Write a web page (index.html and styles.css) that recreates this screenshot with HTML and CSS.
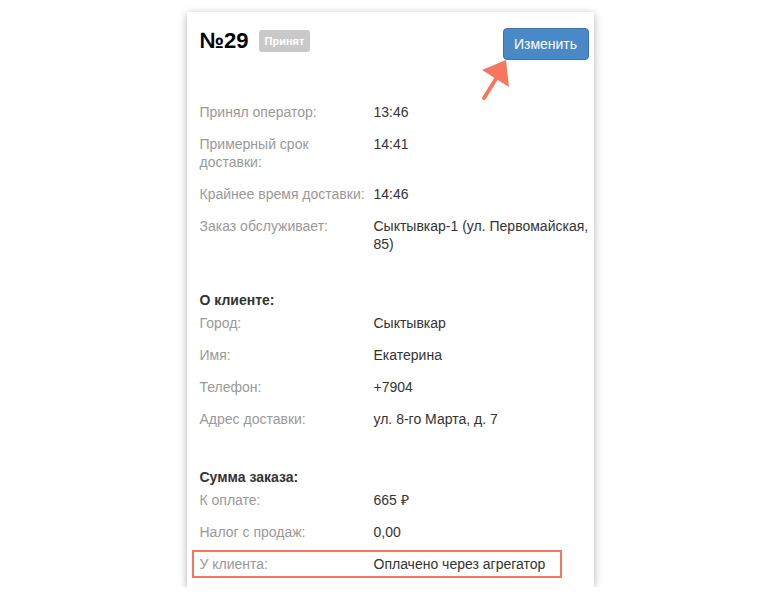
FILE: index.html
```html
<!DOCTYPE html>
<html lang="ru">
<head>
  <meta charset="UTF-8" />
  <meta name="viewport" content="width=device-width, initial-scale=1.0" />
  <title>Заказ №29</title>
  <link rel="stylesheet" href="styles.css">
</head>
<body>
  <div class="card">
    <div class="head">
      <h1>№29</h1>
      <span class="badge">Принят</span>
      <button class="edit" type="button">Изменить</button>
    </div>

    <svg class="arrow" width="40" height="50" viewBox="0 0 40 50">
      <polygon points="5,14 29,4 32,31" fill="#f7765f" />
      <line x1="7" y1="42" x2="22" y2="18" stroke="#f7765f" stroke-width="4" stroke-linecap="round" />
    </svg>

    <div class="rows">
      <div class="row"><span class="label">Принял оператор:</span><span class="value">13:46</span></div>
      <div class="row"><span class="label">Примерный срок доставки:</span><span class="value">14:41</span></div>
      <div class="row"><span class="label">Крайнее время доставки:</span><span class="value">14:46</span></div>
      <div class="row"><span class="label">Заказ обслуживает:</span><span class="value">Сыктывкар-1 (ул. Первомайская, 85)</span></div>

      <h3>О клиенте:</h3>
      <div class="row"><span class="label">Город:</span><span class="value">Сыктывкар</span></div>
      <div class="row"><span class="label">Имя:</span><span class="value">Екатерина</span></div>
      <div class="row"><span class="label">Телефон:</span><span class="value">+7904</span></div>
      <div class="row"><span class="label">Адрес доставки:</span><span class="value">ул. 8-го Марта, д. 7</span></div>

      <h3 class="sum">Сумма заказа:</h3>
      <div class="row"><span class="label">К оплате:</span><span class="value">665 ₽</span></div>
      <div class="row"><span class="label">Налог с продаж:</span><span class="value">0,00</span></div>
      <div class="row marked"><span class="label">У клиента:</span><span class="value">Оплачено через агрегатор</span></div>
    </div>
  </div>
</body>
</html>
```

FILE: styles.css
```css
body {
  margin: 0;
  background: #fff;
  font-family: "Liberation Sans", Arial, sans-serif;
  font-size: 14px;
  color: #333;
}
.card {
  position: relative;
  width: 407px;
  box-sizing: border-box;
  margin: 12px auto 0;
  padding: 16px 5px 9px 13px;
  background: #fff;
  box-shadow: 0 2px 8px rgba(0,0,0,0.3);
}
.head {
  display: flex;
  align-items: flex-start;
  height: 32px;
}
h1 {
  margin: 0;
  font-size: 22px;
  line-height: 26px;
  color: #000;
}
.badge {
  margin: 2px 0 0 10px;
  height: 22px;
  line-height: 22px;
  padding: 0 6px;
  border-radius: 3px;
  background: #c9c9c9;
  color: #fff;
  font-size: 11px;
  font-weight: bold;
}
.edit {
  margin-left: auto;
  height: 32px;
  width: 86px;
  padding: 0;
  border: 1px solid #3b73ad;
  border-radius: 4px;
  background: #4a89c8;
  color: #fff;
  font-family: inherit;
  font-size: 14px;
}
.arrow {
  position: absolute;
  left: 290px;
  top: 44px;
}
.rows {
  margin-top: 43px;
}
.row {
  display: grid;
  grid-template-columns: 174px 1fr;
  line-height: 18px;
  margin-bottom: 14px;
}
.label {
  color: #999;
  padding-right: 8px;
}
.value {
  color: #333;
}
h3 {
  margin: 38px 0 5px;
  font-size: 14px;
  line-height: 18px;
  color: #333;
}
h3.sum {
  margin-top: 40px;
}
.row.marked {
  width: 370px;
  box-sizing: border-box;
  margin: -5px 0 0 -8px;
  padding: 3px 0 3px 6px;
  border: 2px solid #f7765f;
}
```
